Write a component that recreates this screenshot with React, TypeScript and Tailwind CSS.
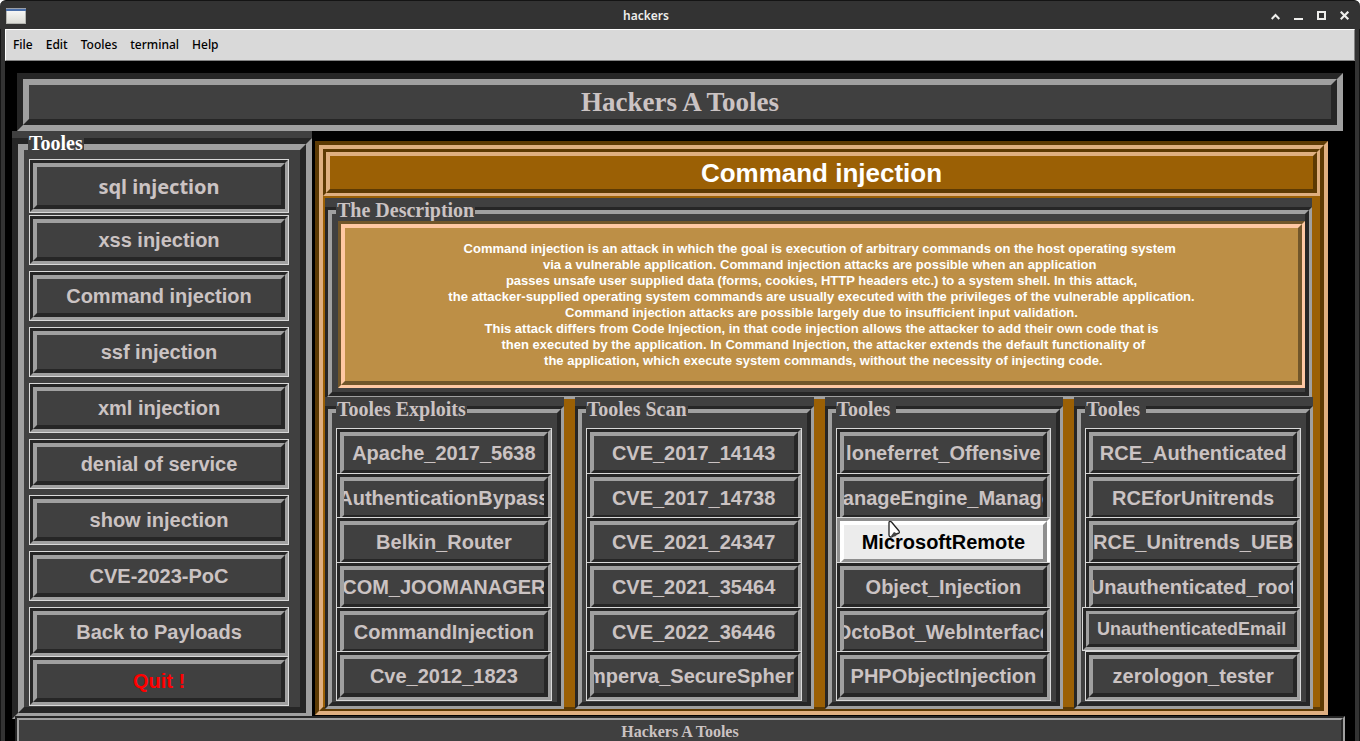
import type { ReactNode } from "react";

type Tone = "gray" | "orange" | "tan" | "light";

const TONES: Record<Tone, { outer: string; inner: string }> = {
  gray: {
    outer: "border-t-[#262626] border-l-[#262626] border-r-[#a0a0a0] border-b-[#a0a0a0]",
    inner: "border-t-[#a0a0a0] border-l-[#a0a0a0] border-r-[#262626] border-b-[#262626] bg-[#404040]",
  },
  orange: {
    outer: "border-t-[#5d3a03] border-l-[#5d3a03] border-r-[#dfaf80] border-b-[#dfaf80]",
    inner: "border-t-[#dfaf80] border-l-[#dfaf80] border-r-[#5d3a03] border-b-[#5d3a03] bg-[#9b6005]",
  },
  tan: {
    outer: "border-t-[#71562a] border-l-[#71562a] border-r-[#ffc8a3] border-b-[#ffc8a3]",
    inner: "border-t-[#ffc8a3] border-l-[#ffc8a3] border-r-[#71562a] border-b-[#71562a] bg-[#bd8f46]",
  },
  light: {
    outer: "border-t-[#8e8e8e] border-l-[#8e8e8e] border-r-white border-b-white",
    inner: "border-t-white border-l-white border-r-[#8e8e8e] border-b-[#8e8e8e] bg-[#ececec]",
  },
};

function Groove({
  tone = "gray",
  outer = "border-3",
  inner = "border-4",
  className = "",
  innerClassName = "",
  children,
}: {
  tone?: Tone;
  outer?: string;
  inner?: string;
  className?: string;
  innerClassName?: string;
  children?: ReactNode;
}) {
  const t = TONES[tone];
  return (
    <span className={`flex min-w-0 flex-1 ${outer} ${t.outer} ${className}`}>
      <span className={`block min-w-0 flex-1 ${inner} ${t.inner} ${innerClassName}`}>{children}</span>
    </span>
  );
}

function ToolButton({
  label,
  className = "h-[50px] w-full",
  textClassName = "text-xl text-[#cbc3c3]",
  tone = "gray",
  inner = "border-4",
}: {
  label: string;
  className?: string;
  textClassName?: string;
  tone?: Tone;
  inner?: string;
}) {
  return (
    <button type="button" className={`relative flex min-w-0 border border-[#d9d9d9] ${className}`}>
      <Groove tone={tone} inner={inner} className="self-stretch" innerClassName="flex! items-center justify-center overflow-hidden">
        <span className={`shrink-0 font-bold whitespace-nowrap ${textClassName}`}>{label}</span>
      </Groove>
    </button>
  );
}

function Legend({ children, className }: { children: ReactNode; className: string }) {
  return (
    <h2
      className={`absolute bg-[#404040] px-px font-['Liberation_Serif',serif] text-xl leading-[23px] font-bold whitespace-pre ${className}`}
    >
      {children}
    </h2>
  );
}

const SIDE = [
  "Command injection",
  "ssf injection",
  "xml injection",
  "denial of service",
  "show injection",
  "CVE-2023-PoC",
  "Back to Payloads",
];

const DESCRIPTION = [
  "Command injection is an attack in which the goal is execution of arbitrary commands on the host operating system ",
  "via a vulnerable application. Command injection attacks are possible when an application ",
  "passes unsafe user supplied data (forms, cookies, HTTP headers etc.) to a system shell. In this attack,",
  "the attacker-supplied operating system commands are usually executed with the privileges of the vulnerable application.",
  "Command injection attacks are possible largely due to insufficient input validation.",
  "This attack differs from Code Injection, in that code injection allows the attacker to add their own code that is",
  " then executed by the application. In Command Injection, the attacker extends the default functionality of",
  " the application, which execute system commands, without the necessity of injecting code.",
].join("\n");

const COLUMNS = [
  {
    title: "Tooles Exploits",
    items: ["Apache_2017_5638", "AuthenticationBypass", "Belkin_Router", "COM_JOOMANAGER", "CommandInjection", "Cve_2012_1823"],
  },
  {
    title: "Tooles Scan",
    items: ["CVE_2017_14143", "CVE_2017_14738", "CVE_2021_24347", "CVE_2021_35464", "CVE_2022_36446", "Imperva_SecureSphere"],
  },
  {
    title: "Tooles ",
    items: ["loneferret_Offensive", "ManageEngine_Manager", "MicrosoftRemote", "Object_Injection", "OctoBot_WebInterface", "PHPObjectInjection"],
  },
  {
    title: "Tooles ",
    items: ["RCE_Authenticated", "RCEforUnitrends", "RCE_Unitrends_UEB", "Unauthenticated_root", "UnauthenticatedEmail", "zerologon_tester"],
  },
];

function columnButton(label: string) {
  if (label === "MicrosoftRemote")
    return <ToolButton key={label} label={label} tone="light" textClassName="text-xl text-black" />;
  if (label === "UnauthenticatedEmail")
    return (
      <ToolButton
        key={label}
        label={label}
        inner="border-3"
        className="-ml-[3px] h-11"
        textClassName="text-lg text-[#cbc3c3]"
      />
    );
  return <ToolButton key={label} label={label} />;
}

function TitleBar() {
  return (
    <header className="flex h-[29px] shrink-0 items-center rounded-t-md border-t border-[#141414] bg-[#333333] pt-0.5 pr-[10px] pl-[6px]">
      <svg width="20" height="16" viewBox="0 0 20 16" aria-hidden="true">
        <defs>
          <linearGradient id="win" x1="0" y1="0" x2="0" y2="1">
            <stop offset="0" stopColor="#fafafa" />
            <stop offset="1" stopColor="#dcdcd6" />
          </linearGradient>
        </defs>
        <rect width="20" height="16" rx="0.5" fill="#b4b5b1" />
        <rect x="1" y="1" width="18" height="14" fill="url(#win)" />
        <rect x="0" y="1" width="20" height="2" fill="#4a6ea8" />
        <rect x="0" y="0" width="20" height="1" fill="#9a9fa8" />
      </svg>
      <h1 className="flex-1 pr-[5px] text-center text-xs font-semibold text-[#eeeeec]">hackers</h1>
      <div className="flex gap-[13px] text-[#eeeeec]">
        <button type="button" aria-label="Roll up" className="size-[10px]">
          <svg width="10" height="10" viewBox="0 0 10 10" fill="none" stroke="currentColor" strokeWidth="2">
            <path d="M0.700 8 4.500 4l3.800 4" />
          </svg>
        </button>
        <button type="button" aria-label="Minimize" className="size-[10px]">
          <svg width="10" height="10" viewBox="0 0 10 10">
            <rect x="0" y="7" width="9" height="2" fill="currentColor" />
          </svg>
        </button>
        <button type="button" aria-label="Maximize" className="size-[10px]">
          <svg width="10" height="10" viewBox="0 0 10 10" fill="none" stroke="currentColor" strokeWidth="2">
            <rect x="1" y="1" width="7" height="7" />
          </svg>
        </button>
        <button type="button" aria-label="Close" className="size-[10px]">
          <svg width="10" height="10" viewBox="0 0 10 10" fill="none" stroke="currentColor" strokeWidth="2.2">
            <path d="m0.700 0.700 7.600 7.600M8.300 0.700 0.700 8.300" />
          </svg>
        </button>
      </div>
    </header>
  );
}

export default function App() {
  return (
    <div className="relative flex h-screen flex-col overflow-hidden bg-white font-['Noto_Sans',sans-serif]">
      <TitleBar />
      <div className="flex min-h-0 flex-1 flex-col border-x border-[#141414] bg-[#333333] px-1">
        <nav className="flex h-8 shrink-0 items-center gap-[13px] border border-t-white border-r-[#828282] border-b-[#828282] border-l-white bg-[#d9d9d9] pl-[7px] text-xs text-black">
          {["File", "Edit", "Tooles", "terminal", "Help"].map((m) => (
            <button type="button" key={m} className="font-medium">
              {m}
            </button>
          ))}
        </nav>
        <main className="min-h-0 flex-1 overflow-hidden bg-black pt-3 font-['Liberation_Sans',sans-serif]">
          <div className="mx-3 flex h-[58px]">
            <Groove outer="border-6" inner="border-6" innerClassName="flex! items-center justify-center">
              <span className="font-['Liberation_Serif',serif] text-[27px] leading-[30px] font-bold text-[#cbc3c3]">
                Hackers A Tooles
              </span>
            </Groove>
          </div>

          <div className="mr-[27px] ml-[7px] flex items-start gap-[3px]">
            <aside className="relative flex h-[588px] w-[300px] shrink-0 bg-[#404040] pt-[7px]">
              <Legend className="top-px left-4 text-white">Tooles</Legend>
              <Groove outer="border-6" inner="border-6" innerClassName="pt-[9px] pr-[11px] pl-[5px]">
                <ToolButton
                  label="sql injection"
                  className="mb-0.5 h-[54px] w-full"
                  textClassName="pt-0.5 text-xl font-['Noto_Sans',sans-serif] text-[#cbc3c3]"
                />
                <ToolButton label="xss injection" />
                <span className="mt-1.5 flex flex-col gap-1.5">
                  {SIDE.map((s) => (
                    <ToolButton key={s} label={s} />
                  ))}
                </span>
                <ToolButton label="Quit !" className="-mt-px h-[50px] w-full" textClassName="text-xl text-[#ff0000]" />
              </Groove>
            </aside>

            <section className="mt-[10px] flex min-w-0 flex-1">
              <Groove tone="orange" outer="border-4" inner="border-4">
                <span className="flex h-[47px]">
                  <Groove tone="orange" innerClassName="flex! items-center justify-center">
                    <span className="text-[26px] leading-[30px] font-bold text-white">Command injection</span>
                  </Groove>
                </span>

                <div className="relative mt-0.5 mr-2 ml-0.5 flex h-[201px] bg-[#404040] pt-[9px]">
                  <Legend className="top-px left-[11px] text-[#cbc3c3]">The Description</Legend>
                  <Groove innerClassName="flex! pt-[7px] pb-[4px] pl-[6px]">
                    <Groove tone="tan" className="relative" innerClassName="flex! items-center justify-center">
                      <p className="text-center text-[13px] leading-4 font-bold whitespace-pre text-white">{DESCRIPTION}</p>
                    </Groove>
                  </Groove>
                </div>

                <div className="relative -mt-0.5 mr-[7px] -mb-0.5 ml-0.5 grid grid-cols-4 gap-[11px]">
                  {COLUMNS.map((c, i) => (
                    <section key={i} className="relative flex h-[312px] min-w-0 bg-[#404040] pt-[9px]">
                      <Legend className="top-px left-[11px] text-[#cbc3c3]">{c.title}</Legend>
                      <Groove innerClassName="pt-[15px] pr-[5px] pl-1">
                        <span className="grid h-[268px] grid-cols-1 grid-rows-6">{c.items.map(columnButton)}</span>
                      </Groove>
                    </section>
                  ))}
                </div>
              </Groove>
            </section>
          </div>

          <footer className="relative -mt-[3px] mr-[10px] ml-[10px] flex h-8">
            <Groove outer="border-2" inner="border-2" innerClassName="text-center">
              <span className="font-['Liberation_Serif',serif] text-base leading-6 font-bold text-[#cbc3c3]">Hackers A Tooles</span>
            </Groove>
          </footer>
        </main>
      </div>
      <svg className="absolute top-[520px] left-[887px]" width="14" height="19" viewBox="0 0 14 19" aria-hidden="true">
        <path d="M2 2.5C2 1 3.500 1 4.500 2L12 11c1 1.500 0 2.500-1.500 2.500L8 14.500l-2.500 2C4 17.500 2 17 2 15z" fill="#fff" stroke="#222" strokeWidth="1.300" />
        <path d="m4 16 3-4 4 2-3 2.500z" fill="#444" />
      </svg>
    </div>
  );
}
